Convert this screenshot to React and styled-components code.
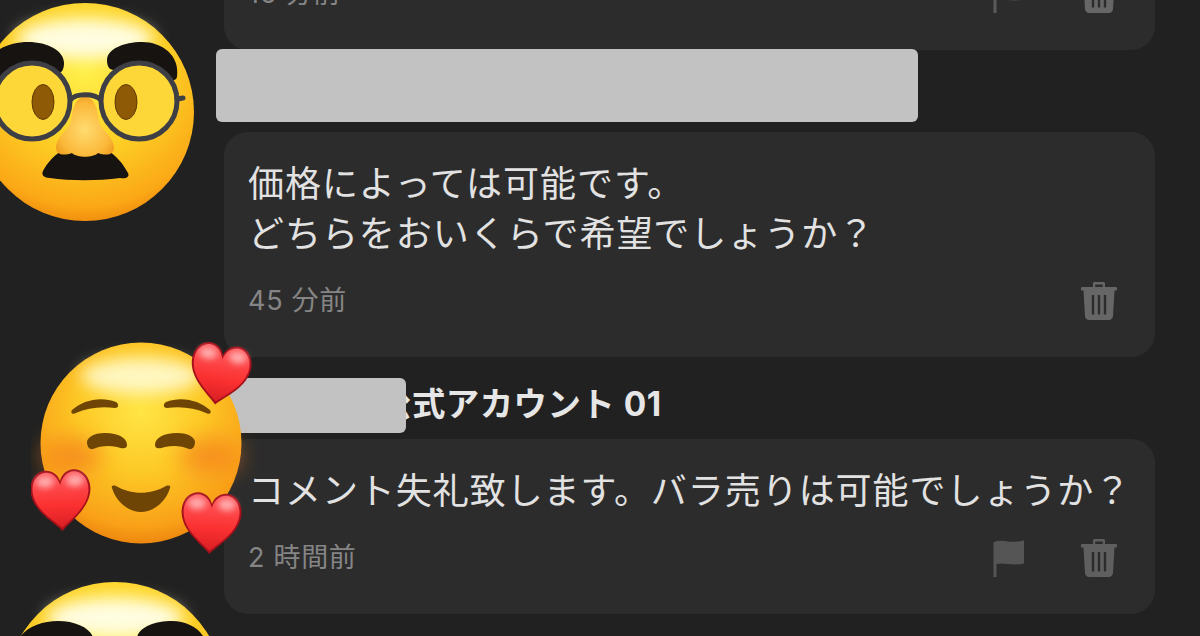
import React from "react";
import styled, { createGlobalStyle } from "styled-components";

const GlobalStyle = createGlobalStyle`
  html, body {
    margin: 0;
    padding: 0;
    background: #212121;
  }
`;

const Page = styled.div`
  width: 1200px;
  height: 636px;
  overflow: hidden;
  background: #212121;
  font-family: "Noto Sans CJK JP", "Noto Sans", sans-serif;
`;

const Feed = styled.div`
  display: flex;
  flex-direction: column;
  margin-top: -175px;
  padding: 0 45px 0 224px;
`;

const Comment = styled.div`
  position: relative;
  display: flex;
  flex-direction: column;
  padding-top: 21px;
`;

const NameRow = styled.div`
  height: 52px;
  margin-bottom: 9px;
  padding-left: 154px;
  font-family: Inter, "Noto Sans CJK JP", sans-serif;
  font-size: 33.4px;
  line-height: 52px;
  font-weight: 700;
  letter-spacing: 0.5px;
  color: #e6e6e6;
  white-space: nowrap;
`;

const Card = styled.div`
  background: #2c2c2c;
  border-radius: 24px;
  padding: 24px 24px 37px;
`;

const Body = styled.div`
  font-size: 36px;
  line-height: 50px;
  letter-spacing: 0.95px;
  color: #e2e2e2;
  white-space: pre;
`;

const Footer = styled.div`
  display: flex;
  align-items: center;
  height: 38px;
  margin-top: 26px;
  gap: 56px;
`;

const Time = styled.div`
  flex: 1;
  font-family: Inter, "Noto Sans CJK JP", sans-serif;
  font-size: 27px;
  line-height: 36px;
  letter-spacing: 0.7px;
  color: #858585;
`;

const IconSlot = styled.div`
  display: flex;
  align-items: center;
  justify-content: center;
  width: ${(p) => p.$w}px;
  color: ${(p) => p.$color};
  margin-right: ${(p) => p.$right || 0}px;
`;

const Redaction = styled.div`
  position: absolute;
  left: ${(p) => p.$left}px;
  top: ${(p) => p.$top}px;
  width: ${(p) => p.$width}px;
  height: ${(p) => p.$height}px;
  background: #c2c2c2;
  border-radius: 6px;
`;

const Avatar = styled.div`
  position: absolute;
  left: ${(p) => p.$left}px;
  top: ${(p) => p.$top}px;
  z-index: 2;
  line-height: 0;
`;

const FlagIcon = () => (
  <svg width="32" height="38" viewBox="0 0 32 38">
    <path
      fill="currentColor"
      d="M0.5 3C5 1.6 10 1.6 15 2.4C20 3.2 26 2.8 31 1.2V24.4C26 25.6 20 25.8 15 25C10 24.2 6.5 24.2 3.5 25V38H0.5Z"
    />
  </svg>
);

const TrashIcon = () => (
  <svg width="36" height="38" viewBox="0 0 36 38">
    <path
      fill="currentColor"
      fillRule="evenodd"
      d="M12 1.5C12 0.7 12.7 0 13.5 0H22.5C23.3 0 24 0.7 24 1.5V5H35C35.6 5 36 5.5 36 6V7.5C36 8 35.6 8.5 35 8.5H33.5L32 34C31.9 36.3 30.2 38 27.8 38H8.2C5.8 38 4.1 36.3 4 34L2.5 8.5H1C0.4 8.5 0 8 0 7.5V6C0 5.5 0.4 5 1 5H12ZM14.2 2.4V5H21.8V2.4ZM10.8 13V32.5H13.2V13ZM16.8 13V32.5H19.2V13ZM22.8 13V32.5H25.2V13Z"
    />
  </svg>
);

const Heart = ({ x, y, rotate }) => (
  <g transform={`translate(${x} ${y}) rotate(${rotate})`}>
    <path
      fill="#a5101a"
      d="M0 31C-8 22 -30 9 -30 -11C-30 -23 -22 -30 -14 -30C-8 -30 -2 -26 0 -19C2 -26 8 -30 14 -30C22 -30 30 -23 30 -11C30 9 8 22 0 31Z"
    />
    <path
      fill="url(#heartFill)"
      d="M0 28C-8 20 -28 8 -28 -11C-28 -21 -21 -28 -14 -28C-8 -28 -2 -23 0 -15C2 -23 8 -28 14 -28C21 -28 28 -21 28 -11C28 8 8 20 0 28Z"
    />
    <ellipse cx="-15" cy="-19" rx="9" ry="6" fill="#ffc4c4" opacity="0.8" filter="url(#soft2)" />
    <ellipse cx="15" cy="-19" rx="9" ry="6" fill="#ffc4c4" opacity="0.8" filter="url(#soft2)" />
  </g>
);

const SmilingFace = () => (
  <svg width="230" height="225" viewBox="0 0 230 225">
    <defs>
      <radialGradient id="smileFace" cx="50%" cy="34%" r="68%">
        <stop offset="0%" stopColor="#ffe545" />
        <stop offset="45%" stopColor="#fdc926" />
        <stop offset="85%" stopColor="#f9a018" />
        <stop offset="100%" stopColor="#ea820c" />
      </radialGradient>
      <linearGradient id="heartFill" x1="0" y1="0" x2="0" y2="1">
        <stop offset="0%" stopColor="#ff5a5e" />
        <stop offset="60%" stopColor="#fb3030" />
        <stop offset="100%" stopColor="#d81f24" />
      </linearGradient>
      <filter id="soft2" x="-60%" y="-60%" width="220%" height="220%">
        <feGaussianBlur stdDeviation="3" />
      </filter>
      <filter id="soft6" x="-40%" y="-80%" width="180%" height="260%">
        <feGaussianBlur stdDeviation="8" />
      </filter>
      <filter id="soft8" x="-100%" y="-150%" width="300%" height="400%">
        <feGaussianBlur stdDeviation="11" />
      </filter>
    </defs>
    <circle cx="110" cy="101" r="100.5" fill="url(#smileFace)" />
    <ellipse cx="110" cy="34" rx="60" ry="18" fill="#fffbd0" opacity="0.9" filter="url(#soft6)" />
    <ellipse cx="42" cy="114" rx="30" ry="18" fill="#f5801c" opacity="0.7" filter="url(#soft8)" />
    <ellipse cx="178" cy="114" rx="30" ry="18" fill="#f5801c" opacity="0.7" filter="url(#soft8)" />
    <g fill="#6e4504">
      <path d="M41 68C39 71 42 73 45 71C56 66 70 64 84 66C88 66 88 62 85 60C70 54 52 58 41 68Z" />
      <path d="M179 68C181 71 178 73 175 71C164 66 150 64 136 66C132 66 132 62 135 60C150 54 168 58 179 68Z" />
      <path d="M56 100C56 96 62 91 74 91C88 91 96 96 96 103C96 107 92 107 86 105C77 103 69 104 62 107C58 108 56 104 56 100Z" />
      <path d="M164 100C164 96 158 91 146 91C132 91 124 96 124 103C124 107 128 107 134 105C143 103 151 104 158 107C162 108 164 104 164 100Z" />
      <path d="M81 146C80 144 82 143 85 144C100 153 120 153 135 144C138 143 140 144 139 146C135 160 122 170 110 170C98 170 85 160 81 146Z" />
    </g>
    <Heart x="189" y="32" rotate="9" />
    <Heart x="30" y="158" rotate="-3" />
    <Heart x="180" y="181" rotate="3" />
  </svg>
);

const DisguiseFace = ({ id }) => (
  <svg width="218" height="218" viewBox="0 0 218 218">
    <defs>
      <radialGradient id={`${id}Face`} cx="50%" cy="30%" r="72%">
        <stop offset="0%" stopColor="#fff04a" />
        <stop offset="50%" stopColor="#fdd026" />
        <stop offset="88%" stopColor="#fba816" />
        <stop offset="100%" stopColor="#ee880c" />
      </radialGradient>
      <radialGradient id={`${id}Nose`} cx="50%" cy="55%" r="62%">
        <stop offset="0%" stopColor="#ffdb70" />
        <stop offset="70%" stopColor="#fbb93a" />
        <stop offset="100%" stopColor="#ee9a1c" />
      </radialGradient>
      <filter id={`${id}Blur`} x="-40%" y="-80%" width="180%" height="260%">
        <feGaussianBlur stdDeviation="8" />
      </filter>
    </defs>
    <circle cx="109" cy="109" r="109" fill={`url(#${id}Face)`} />
    <ellipse cx="109" cy="36" rx="68" ry="20" fill="#fffde0" filter={`url(#${id}Blur)`} />
    <g fill="#161310">
      <path d="M8 74C8 50 30 39 52 39C72 39 88 48 88 60C88 66 86 70 82 70L30 80C20 84 8 84 8 74Z" />
      <path d="M201 74C204 52 186 39 166 39C148 39 131 46 131 57C131 63 133 67 138 67L190 76C196 78 200 78 201 74Z" />
      <path d="M67 168C72 158 84 146 90 147C97 153 120 153 127 147C134 146 146 158 152 170C154 174 150 176 144 175C122 178 94 178 74 175C68 175 65 172 67 168Z" />
    </g>
    <circle cx="56" cy="98" r="38" fill="#fdd638" />
    <circle cx="163" cy="98" r="38" fill="#fdd638" />
    <path
      fill={`url(#${id}Nose)`}
      d="M109 94C118 94 121 104 123 118C125 128 138 133 138 145C138 152 130 153 122 150C117 155 101 155 96 150C88 153 80 152 80 145C80 133 93 128 95 118C97 104 100 94 109 94Z"
    />
    <g fill="#8f5a05" stroke="#5e3a04" strokeWidth="1">
      <ellipse cx="67" cy="99" rx="11" ry="17.5" />
      <ellipse cx="150" cy="99" rx="11" ry="17.5" />
    </g>
    <g fill="none" stroke="#3e3f45" strokeWidth="5">
      <circle cx="56" cy="98" r="38" />
      <circle cx="163" cy="98" r="38" />
      <path d="M94 97C100 90 118 90 125 97" />
      <path d="M201 96L207 95" strokeLinecap="round" />
    </g>
  </svg>
);

export default function App() {
  return (
    <>
      <GlobalStyle />
      <Page>
        <Feed>
          <Card>
            <Body>{"\n\n"}</Body>
            <Footer>
              <Time>16 分前</Time>
              <IconSlot $w={32} $color="#5a5a5a">
                <FlagIcon />
              </IconSlot>
              <IconSlot $w={36} $color="#666666" $right={14}>
                <TrashIcon />
              </IconSlot>
            </Footer>
          </Card>

          <Comment>
            <NameRow />
            <Avatar $left={-248} $top={-47}>
              <DisguiseFace id="first" />
            </Avatar>
            <Redaction $left={-8} $top={-1} $width={702} $height={73} />
            <Card>
              <Body>{"価格によっては可能です。\nどちらをおいくらで希望でしょうか？"}</Body>
              <Footer>
                <Time>45 分前</Time>
                <IconSlot $w={36} $color="#666666" $right={14}>
                  <TrashIcon />
                </IconSlot>
              </Footer>
            </Card>
          </Comment>

          <Comment>
            <Redaction $left={4} $top={21} $width={178} $height={55} />
            <Avatar $left={-193} $top={-15}>
              <SmilingFace />
            </Avatar>
            <NameRow>公式アカウント 01</NameRow>
            <Card>
              <Body>コメント失礼致します。バラ売りは可能でしょうか？</Body>
              <Footer>
                <Time>2 時間前</Time>
                <IconSlot $w={32} $color="#555555">
                  <FlagIcon />
                </IconSlot>
                <IconSlot $w={36} $color="#5f5f5f" $right={14}>
                  <TrashIcon />
                </IconSlot>
              </Footer>
            </Card>
          </Comment>

          <Comment>
            <Avatar $left={-218} $top={-32}>
              <DisguiseFace id="third" />
            </Avatar>
          </Comment>
        </Feed>
      </Page>
    </>
  );
}
